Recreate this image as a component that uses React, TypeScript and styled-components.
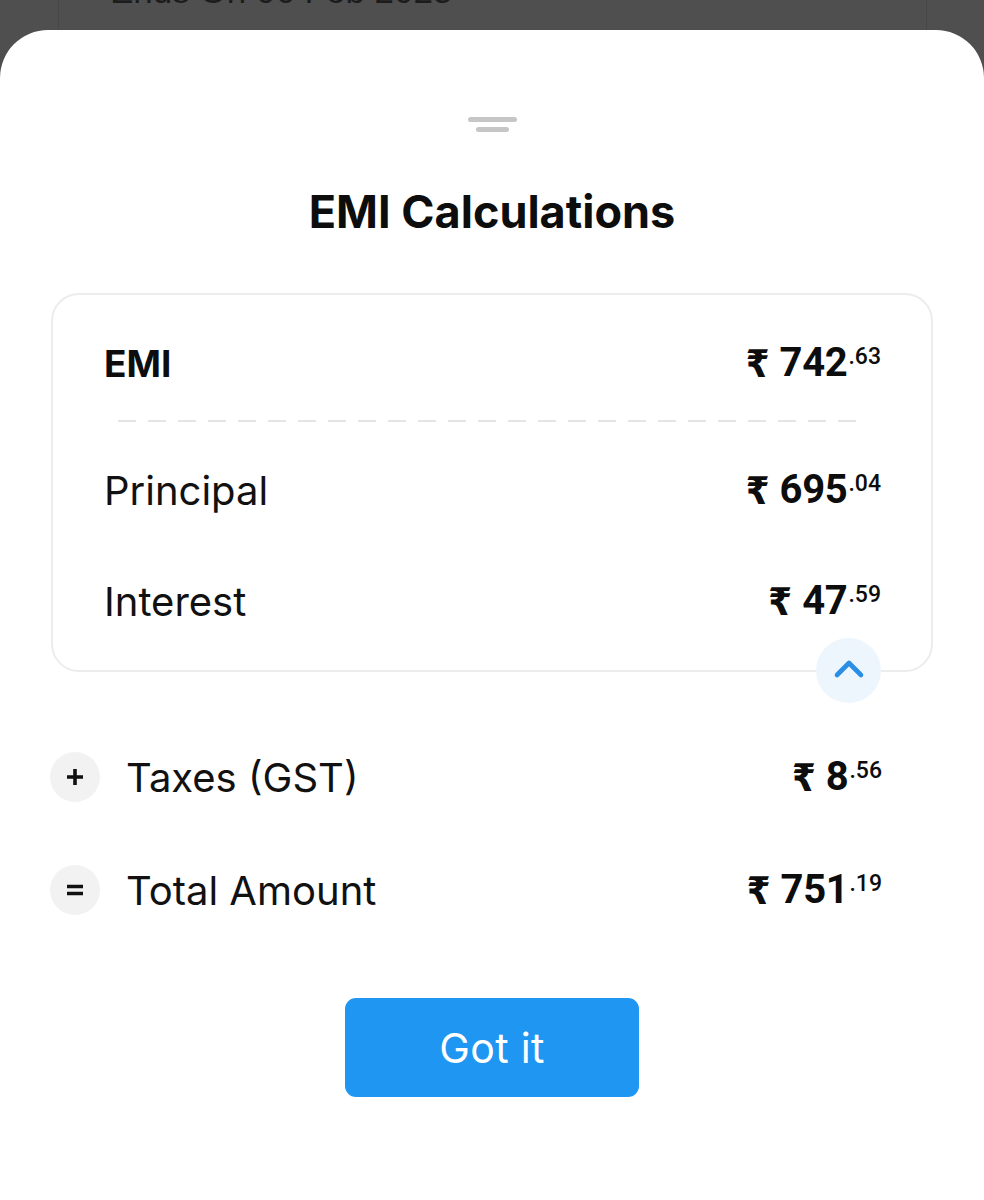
import React from 'react';
import styled, { createGlobalStyle } from 'styled-components';

type Line = {
	label: string;
	rupees: string;
	paise: string;
};

const breakup: Line[] = [
	{ label: 'Principal', rupees: '695', paise: '.04' },
	{ label: 'Interest', rupees: '47', paise: '.59' },
];

const GlobalStyle = createGlobalStyle`
	html, body {
		margin: 0;
		padding: 0;
		background: #4f4f4f;
	}
	body {
		font-family: Inter, 'Noto Sans', sans-serif;
		color: #111;
		-webkit-font-smoothing: antialiased;
	}
`;

const Amount: React.FC<{ rupees: string; paise: string }> = ({ rupees, paise }) => (
	<AmountWrap>
		<Rupee>₹</Rupee>
		<Whole>{rupees}</Whole>
		<Fraction>{paise}</Fraction>
	</AmountWrap>
);

const PlusIcon = () => (
	<svg width="20" height="20" viewBox="0 0 20 20">
		<path d="M2 10h16M10 2v16" stroke="#111" strokeWidth="3.6" strokeLinecap="butt" />
	</svg>
);

const EqualsIcon = () => (
	<svg width="20" height="20" viewBox="0 0 20 20">
		<path d="M2 6.5h16M2 13.5h16" stroke="#111" strokeWidth="3.6" strokeLinecap="butt" />
	</svg>
);

const App: React.FC = () => {
	return (
		<Page>
			<GlobalStyle />
			<Backdrop>
				<BackdropCard>
					<BackdropText>Ends On 06 Feb 2025</BackdropText>
				</BackdropCard>
			</Backdrop>
			<Sheet>
				<Handle>
					<HandleBar width={49} />
					<HandleBar width={33} />
				</Handle>
				<Title>EMI Calculations</Title>
				<Card>
					<EmiRow>
						<EmiLabel>EMI</EmiLabel>
						<Amount rupees="742" paise=".63" />
					</EmiRow>
					<Divider />
					{breakup.map((line, i) => (
						<BreakupRow key={line.label} first={i === 0}>
							<RowLabel>{line.label}</RowLabel>
							<Amount rupees={line.rupees} paise={line.paise} />
						</BreakupRow>
					))}
					<CollapseButton aria-label="Collapse">
						<svg width="34" height="22" viewBox="0 0 34 22">
							<polyline
								points="5,17 17,5 29,17"
								fill="none"
								stroke="#2a8de6"
								strokeWidth="4.6"
								strokeLinecap="round"
								strokeLinejoin="round"
							/>
						</svg>
					</CollapseButton>
				</Card>
				<SummaryRow top={80}>
					<SummaryLeft>
						<OperatorBadge>
							<PlusIcon />
						</OperatorBadge>
						<RowLabel>Taxes (GST)</RowLabel>
					</SummaryLeft>
					<Amount rupees="8" paise=".56" />
				</SummaryRow>
				<SummaryRow top={63}>
					<SummaryLeft>
						<OperatorBadge>
							<EqualsIcon />
						</OperatorBadge>
						<RowLabel>Total Amount</RowLabel>
					</SummaryLeft>
					<Amount rupees="751" paise=".19" />
				</SummaryRow>
				<ButtonRow>
					<PrimaryButton>Got it</PrimaryButton>
				</ButtonRow>
			</Sheet>
		</Page>
	);
};

const Page = styled.div`
	display: flex;
	flex-direction: column;
	min-height: 100vh;
	background: #4f4f4f;
	overflow: hidden;
`;

const Backdrop = styled.div`
	height: 30px;
	display: flex;
	flex-direction: column;
	justify-content: flex-end;
	padding: 0 57px 0 58px;
`;

const BackdropCard = styled.div`
	border-left: 1px solid #474747;
	border-right: 1px solid #474747;
	padding: 0 0 0 51px;
	height: 30px;
	overflow: hidden;
	display: flex;
	align-items: flex-end;
`;

const BackdropText = styled.div`
	font-family: 'Liberation Sans', Arial, sans-serif;
	font-size: 35px;
	line-height: 1;
	color: #1c1c1c;
	margin-bottom: 22px;
	white-space: nowrap;
`;

const Sheet = styled.div`
	flex: 1;
	background: #fff;
	border-radius: 48px 48px 0 0;
	padding: 87px 51px 60px;
	display: flex;
	flex-direction: column;
`;

const Handle = styled.div`
	display: flex;
	flex-direction: column;
	align-items: center;
	gap: 5px;
`;

const HandleBar = styled.div<{ width: number }>`
	width: ${(p) => p.width}px;
	height: 5px;
	border-radius: 3px;
	background: #c6c6c6;
`;

const Title = styled.h1`
	margin: 55px 0 0;
	text-align: center;
	font-size: 45px;
	line-height: 50px;
	font-weight: 700;
	letter-spacing: 0;
	color: #0d0d0d;
`;

const Card = styled.div`
	position: relative;
	margin-top: 56px;
	border: 2px solid #ececec;
	border-radius: 28px;
	padding: 38px 50px 39px 51px;
`;

const RowBase = styled.div`
	display: flex;
	align-items: center;
	justify-content: space-between;
	height: 60px;
`;

const EmiRow = styled(RowBase)``;

const EmiLabel = styled.span`
	font-size: 37px;
	font-weight: 700;
	color: #0d0d0d;
`;

const Divider = styled.div`
	margin: 27px 23px 0 14px;
	height: 2px;
	background: repeating-linear-gradient(
		to right,
		#e4e4e4 0,
		#e4e4e4 18px,
		transparent 18px,
		transparent 30px
	);
`;

const BreakupRow = styled(RowBase)<{ first: boolean }>`
	margin-top: ${(p) => (p.first ? 38 : 51)}px;
`;

const RowLabel = styled.span`
	font-size: 40px;
	font-weight: 400;
	color: #111;
	letter-spacing: 0;
`;

const AmountWrap = styled.div`
	display: flex;
	align-items: flex-start;
	font-family: Roboto, 'Noto Sans', sans-serif;
	font-weight: 700;
	color: #0d0d0d;
`;

const Rupee = styled.span`
	font-family: 'DejaVu Sans Condensed', 'DejaVu Sans', 'Noto Sans', sans-serif;
	font-size: 38px;
	line-height: 40px;
	font-weight: 700;
	margin-right: 10px;
	margin-top: 1px;
`;

const Whole = styled.span`
	font-size: 40px;
	line-height: 40px;
	letter-spacing: -0.3px;
`;

const Fraction = styled.span`
	font-size: 23px;
	line-height: 22px;
	font-weight: 500;
	margin-top: 3px;
	margin-left: 1px;
`;

const CollapseButton = styled.button`
	position: absolute;
	right: 50px;
	bottom: -33px;
	width: 65px;
	height: 65px;
	border-radius: 50%;
	border: none;
	padding: 0;
	background: #eef6fd;
	display: flex;
	align-items: center;
	justify-content: center;
	cursor: pointer;

	svg {
		margin-top: -3px;
	}
`;

const SummaryRow = styled.div<{ top: number }>`
	display: flex;
	align-items: center;
	justify-content: space-between;
	margin-top: ${(p) => p.top}px;
	padding-right: 51px;
	height: 50px;
`;

const SummaryLeft = styled.div`
	display: flex;
	align-items: center;
	gap: 26px;
	margin-left: -1px;
`;

const OperatorBadge = styled.div`
	width: 50px;
	height: 50px;
	border-radius: 50%;
	background: #f2f2f2;
	display: flex;
	align-items: center;
	justify-content: center;
`;

const ButtonRow = styled.div`
	display: flex;
	justify-content: center;
	margin-top: 83px;
`;

const PrimaryButton = styled.button`
	width: 294px;
	height: 99px;
	border: none;
	border-radius: 11px;
	background: #1e96f2;
	color: #fff;
	font-family: Inter, 'Noto Sans', sans-serif;
	font-size: 41px;
	font-weight: 400;
	letter-spacing: 0.3px;
	cursor: pointer;
`;

export default App;
